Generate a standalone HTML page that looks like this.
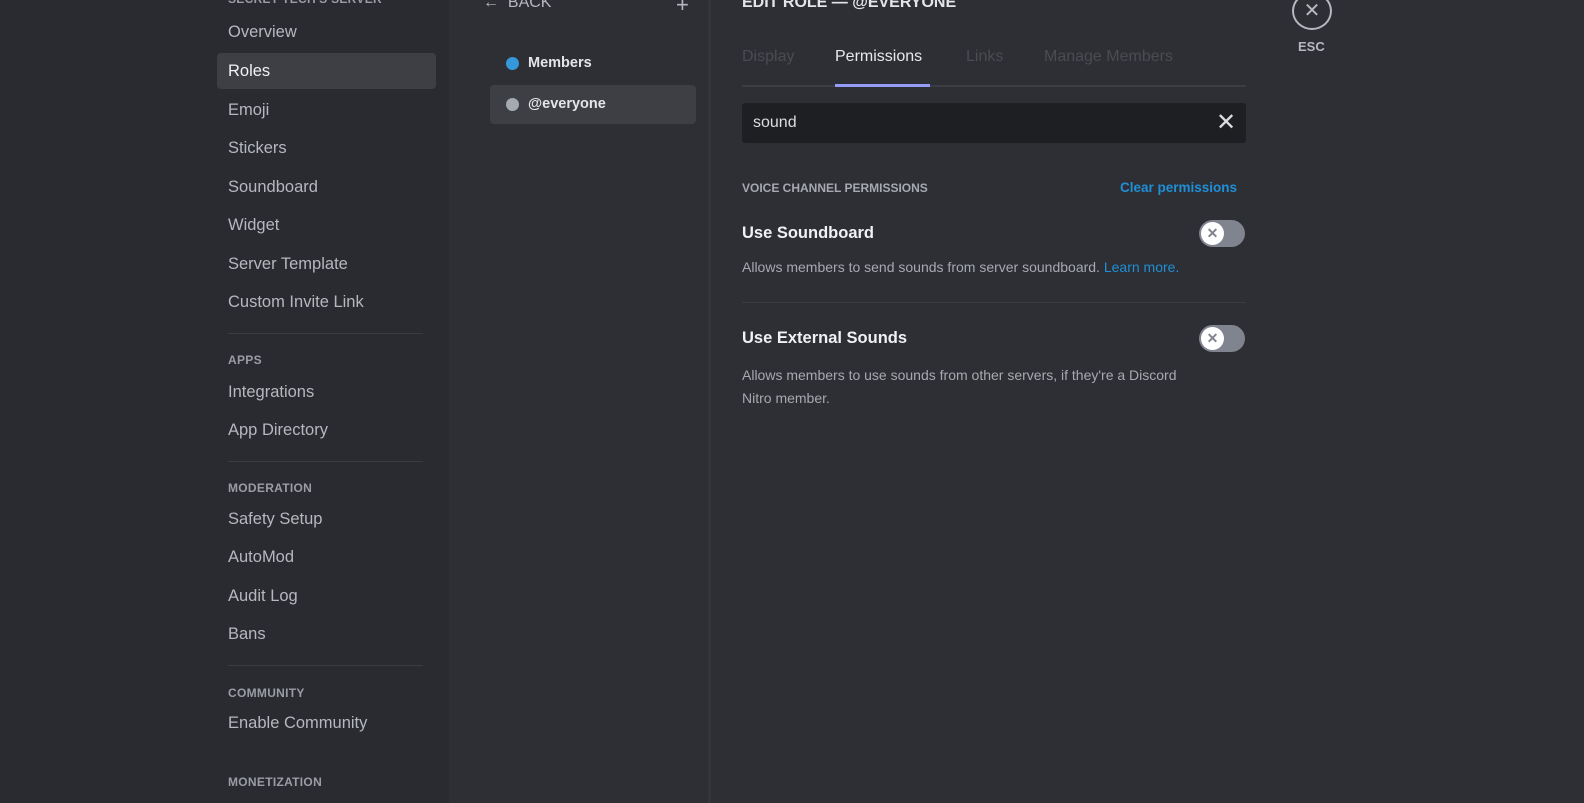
<!DOCTYPE html>
<html><head><meta charset="utf-8"><style>
*{margin:0;padding:0;box-sizing:border-box}
body{width:1584px;height:803px;overflow:hidden;background:#2e2f35;font-family:"Liberation Sans",sans-serif;position:relative}
.side{position:absolute;left:0;top:0;width:449px;height:803px;background:#2a2b30}
.roles{position:absolute;left:449px;top:0;width:259px;height:803px;background:#2e2f35}
.div{position:absolute;left:708px;top:0;width:3px;height:803px;background:#34353b}
.main{position:absolute;left:711px;top:0;right:0;height:803px;background:#2e2f35}
.it{position:absolute;left:228px;font-size:16.5px;color:#b5b8be}
.hd{position:absolute;left:228px;font-size:12px;font-weight:bold;color:#9a9da4;letter-spacing:.3px}
.sep{position:absolute;left:228px;width:195px;height:1px;background:#3a3c42}
.t{position:absolute;font-size:16px}
</style></head><body>
<div class="side"></div>
<div class="roles"></div>
<div class="div"></div>
<div class="main"></div>

<div class="hd" style="top:-8px">SECRET TECH'S SERVER</div>
<div class="it" style="top:23px">Overview</div>
<div style="position:absolute;left:217px;top:53px;width:219px;height:36px;background:#3d3f45;border-radius:4px"></div>
<div class="it" style="top:62px;color:#f0f1f3">Roles</div>
<div class="it" style="top:101px">Emoji</div>
<div class="it" style="top:139px">Stickers</div>
<div class="it" style="top:178px">Soundboard</div>
<div class="it" style="top:216px">Widget</div>
<div class="it" style="top:255px">Server Template</div>
<div class="it" style="top:293px">Custom Invite Link</div>
<div class="sep" style="top:333px"></div>
<div class="hd" style="top:353px">APPS</div>
<div class="it" style="top:383px">Integrations</div>
<div class="it" style="top:421px">App Directory</div>
<div class="sep" style="top:461px"></div>
<div class="hd" style="top:481px">MODERATION</div>
<div class="it" style="top:510px">Safety Setup</div>
<div class="it" style="top:548px">AutoMod</div>
<div class="it" style="top:587px">Audit Log</div>
<div class="it" style="top:625px">Bans</div>
<div class="sep" style="top:665px"></div>
<div class="hd" style="top:686px">COMMUNITY</div>
<div class="it" style="top:714px">Enable Community</div>
<div class="hd" style="top:775px">MONETIZATION</div>

<div class="t" style="left:483px;top:-6px;color:#b5b8be">&#8592;&nbsp; BACK</div>
<div class="t" style="left:676px;top:-8px;color:#b5b8be;font-size:22px">+</div>
<div style="position:absolute;left:506px;top:57px;width:13px;height:13px;border-radius:50%;background:#3498db"></div>
<div class="t" style="left:528px;top:55px;font-size:14.5px;font-weight:bold;color:#e3e5e8">Members</div>
<div style="position:absolute;left:490px;top:85px;width:206px;height:39px;background:#3d3f45;border-radius:4px"></div>
<div style="position:absolute;left:506px;top:98px;width:13px;height:13px;border-radius:50%;background:#a5a9b0"></div>
<div class="t" style="left:528px;top:96px;font-size:14.5px;font-weight:bold;color:#e3e5e8">@everyone</div>

<div class="t" style="left:742px;top:-6px;font-weight:bold;color:#e3e5e8">EDIT ROLE — @EVERYONE</div>
<div class="t" style="left:1222px;top:-12px;font-weight:bold;color:#e3e5e8">···</div>
<div class="t" style="left:742px;top:48px;color:#4a4c52">Display</div>
<div class="t" style="left:835px;top:48px;color:#e8e9eb">Permissions</div>
<div class="t" style="left:966px;top:48px;color:#4a4c52">Links</div>
<div class="t" style="left:1044px;top:48px;color:#4a4c52">Manage Members</div>
<div style="position:absolute;left:742px;top:85px;width:504px;height:2px;background:#3b3d43"></div>
<div style="position:absolute;left:835px;top:84px;width:95px;height:3px;background:#949cf7"></div>
<div style="position:absolute;left:742px;top:103px;width:504px;height:40px;background:#1e1f22;border-radius:3px"></div>
<div class="t" style="left:753px;top:114px;color:#dbdee1">sound</div>
<div class="t" style="left:1216px;top:108px;color:#dbdee1;font-size:24px">&#x2715;</div>

<div class="t" style="left:742px;top:181px;font-size:12px;font-weight:bold;color:#a6a9af">VOICE CHANNEL PERMISSIONS</div>
<div class="t" style="left:1120px;top:180px;font-size:13.5px;font-weight:bold;color:#1f8fd6">Clear permissions</div>
<div class="t" style="left:742px;top:224px;font-size:16.5px;font-weight:bold;color:#f0f1f3">Use Soundboard</div>
<div class="t" style="left:742px;top:259px;font-size:14px;color:#a6a9af">Allows members to send sounds from server soundboard. <span style="color:#1f8fd6">Learn more.</span></div>
<div style="position:absolute;left:742px;top:302px;width:504px;height:1px;background:#3b3d43"></div>
<div class="t" style="left:742px;top:329px;font-size:16.5px;font-weight:bold;color:#f0f1f3">Use External Sounds</div>
<div class="t" style="left:742px;top:364px;font-size:14px;line-height:23px;color:#a6a9af;width:460px">Allows members to use sounds from other servers, if they're a Discord Nitro member.</div>

<div style="position:absolute;left:1199px;top:220px;width:46px;height:27px;border-radius:14px;background:#80848e"></div>
<div style="position:absolute;left:1201px;top:222px;width:23px;height:23px;border-radius:50%;background:#fff;color:#80848e;font-size:14px;font-weight:bold;text-align:center;line-height:23px">&#x2715;</div>
<div style="position:absolute;left:1199px;top:325px;width:46px;height:27px;border-radius:14px;background:#80848e"></div>
<div style="position:absolute;left:1201px;top:327px;width:23px;height:23px;border-radius:50%;background:#fff;color:#80848e;font-size:14px;font-weight:bold;text-align:center;line-height:23px">&#x2715;</div>

<div style="position:absolute;left:1292px;top:-8px;width:40px;height:38px;border-radius:50%;border:2px solid #b5b8be;color:#b5b8be;text-align:center;line-height:34px;font-size:20px">&#x2715;</div>
<div class="t" style="left:1298px;top:39px;font-size:13px;font-weight:bold;color:#b5b8be">ESC</div>
</body></html>
